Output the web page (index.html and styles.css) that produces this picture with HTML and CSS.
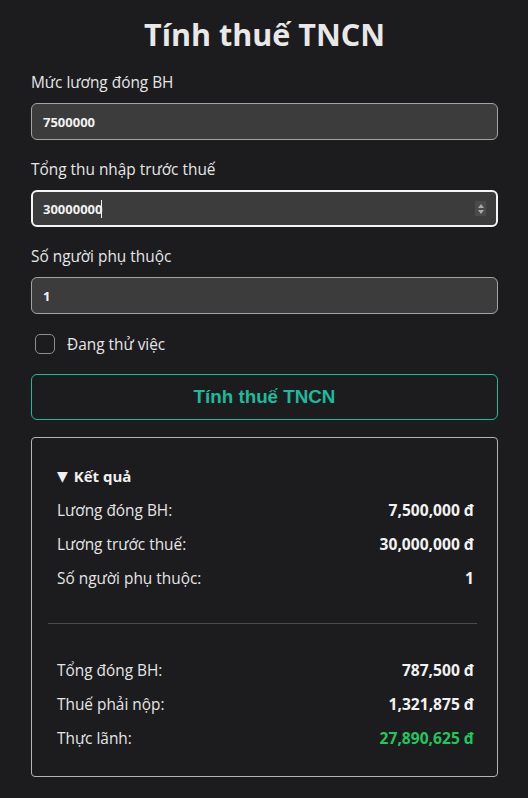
FILE: index.html
```html
<!DOCTYPE html>
<html lang="vi">
<head>
<meta charset="utf-8">
<title>Tính thuế TNCN</title>
<link rel="stylesheet" href="styles.css">
</head>
<body>
<main class="page">
  <h1 class="title">Tính thuế TNCN</h1>

  <div class="field">
    <label class="field-label" for="bh">Mức lương đóng BH</label>
    <input class="field-input" id="bh" type="text" value="7500000">
  </div>

  <div class="field">
    <label class="field-label" for="income">Tổng thu nhập trước thuế</label>
    <div class="input-wrap">
      <input class="field-input is-focused" id="income" type="text" value="30000000">
      <span class="caret"></span>
      <span class="spinner"><span class="spin-up"></span><span class="spin-down"></span></span>
    </div>
  </div>

  <div class="field">
    <label class="field-label" for="dep">Số người phụ thuộc</label>
    <input class="field-input" id="dep" type="text" value="1">
  </div>

  <label class="check-row">
    <span class="check-box"></span>
    <span class="check-label">Đang thử việc</span>
  </label>

  <button class="calc-btn" type="button">Tính thuế TNCN</button>

  <section class="result">
    <div class="result-group">
      <div class="result-summary"><span class="tri">▼</span><span>Kết quả</span></div>
      <div class="row"><span>Lương đóng BH:</span><b>7,500,000 đ</b></div>
      <div class="row"><span>Lương trước thuế:</span><b>30,000,000 đ</b></div>
      <div class="row"><span>Số người phụ thuộc:</span><b>1</b></div>
    </div>
    <hr class="divider">
    <div class="result-group">
      <div class="row"><span>Tổng đóng BH:</span><b>787,500 đ</b></div>
      <div class="row"><span>Thuế phải nộp:</span><b>1,321,875 đ</b></div>
      <div class="row"><span>Thực lãnh:</span><b class="net">27,890,625 đ</b></div>
    </div>
  </section>
</main>
</body>
</html>
```

FILE: styles.css
```css
* { box-sizing: border-box; }

html, body {
  margin: 0;
  background: #1c1c1e;
}

body {
  font-family: "Open Sans", "Noto Sans", sans-serif;
  color: #e6e6e6;
  font-size: 15px;
}

.page {
  padding: 12px 30px 20px 31px;
  display: flex;
  flex-direction: column;
}

.title {
  margin: 0 0 16px;
  text-align: center;
  font-size: 30.5px;
  line-height: 44px;
  font-weight: 700;
  color: #e8e8e8;
}

.field {
  display: flex;
  flex-direction: column;
  gap: 10px;
  margin-bottom: 19px;
}

.field-label {
  font-size: 15.4px;
  line-height: 21px;
  color: #e6e6e6;
}

.input-wrap {
  position: relative;
  display: flex;
}

.field-input {
  width: 100%;
  height: 37px;
  padding: 0 11px;
  background: #3c3c3c;
  border: 1px solid #a3a3a3;
  border-radius: 6px;
  color: #f2f2f2;
  font-family: "Open Sans", "Noto Sans", sans-serif;
  font-weight: 700;
  font-size: 13px;
  outline: none;
}

.field-input.is-focused {
  border: 2px solid #f5f5f5;
  padding: 0 10px;
}

.caret {
  position: absolute;
  left: 70px;
  top: 10px;
  width: 1px;
  height: 18px;
  background: #f0f0f0;
}

.spinner {
  position: absolute;
  right: 12px;
  top: 11px;
  width: 11px;
  height: 15px;
  background: #4a4a4a;
  display: flex;
  flex-direction: column;
  align-items: center;
  justify-content: center;
  gap: 2px;
}

.spin-up, .spin-down {
  width: 0;
  height: 0;
  border-left: 3.5px solid transparent;
  border-right: 3.5px solid transparent;
}
.spin-up { border-bottom: 4px solid #a8a8a8; }
.spin-down { border-top: 4px solid #a8a8a8; }

.check-row {
  display: flex;
  align-items: center;
  gap: 12px;
  padding-left: 4px;
  margin-top: 1px;
  margin-bottom: 20px;
  height: 20px;
}

.check-box {
  width: 20px;
  height: 20px;
  border: 1.5px solid #8e8e8e;
  border-radius: 5px;
}

.check-label {
  font-size: 15.4px;
  color: #e6e6e6;
}

.calc-btn {
  height: 46px;
  background: transparent;
  border: 1px solid #1abc9c;
  border-radius: 6px;
  color: #1abc9c;
  font-family: "Liberation Sans", Arial, sans-serif;
  font-weight: 700;
  font-size: 18.8px;
  margin-bottom: 17px;
}

.result {
  border: 1px solid #b4b4b4;
  border-radius: 4px;
  padding: 16px;
}

.result-group {
  display: flex;
  flex-direction: column;
  gap: 10px;
  padding: 10px 7px 10px 9px;
}

.result-summary {
  display: flex;
  align-items: center;
  gap: 6px;
  height: 24px;
  font-weight: 700;
  font-size: 15px;
  color: #f0f0f0;
}

.tri {
  font-size: 14px;
  line-height: 1;
  font-family: "DejaVu Sans", sans-serif;
}

.row {
  display: flex;
  justify-content: space-between;
  align-items: center;
  height: 24px;
  font-size: 15.4px;
}

.row b {
  font-weight: 700;
  font-size: 15.6px;
  color: #f2f2f2;
}

.row b.net {
  color: #22c55e;
}

.divider {
  border: 0;
  border-top: 1px solid #4a4a4a;
  margin: 23px 4px 24px 0;
}
```
